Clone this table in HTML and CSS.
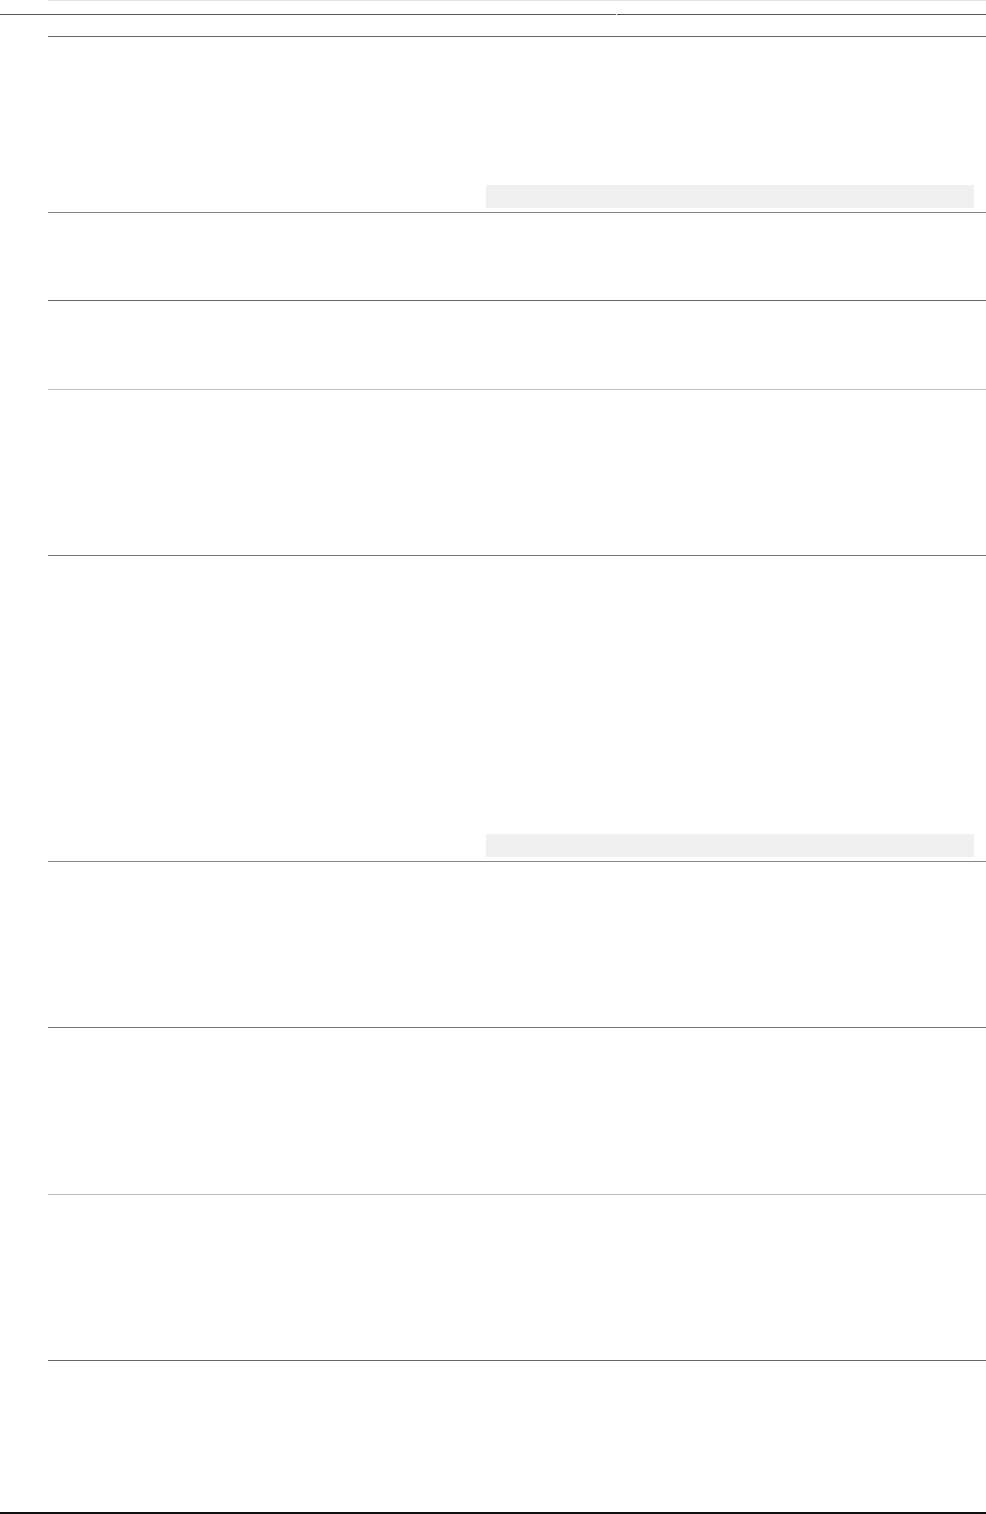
FILE: index.html
```html
<!DOCTYPE html>
<html>
<head>
<meta charset="utf-8">
<link rel="stylesheet" href="styles.css">
</head>
<body>
<div class="page">
  <div class="topline"></div>
  <div class="split">
    <div class="seg seg-left"></div>
    <div class="seg seg-right"></div>
  </div>
  <div class="list">
    <div class="row h176 c66"><div class="bar"></div></div>
    <div class="row h88 c88"></div>
    <div class="row h89 c66"></div>
    <div class="row h166 cc0"></div>
    <div class="row h306 c77"><div class="bar"></div></div>
    <div class="row h166 c88"></div>
    <div class="row h167 c77"></div>
    <div class="row h166 cbb"></div>
    <div class="row h152 c66"></div>
  </div>
  <div class="bottomline"></div>
</div>
</body>
</html>
```

FILE: styles.css
```css
html, body {
  margin: 0;
  padding: 0;
  background: #fff;
  font-family: "Liberation Sans", Arial, sans-serif;
}
.page {
  width: 986px;
  height: 1514px;
  display: flex;
  flex-direction: column;
  overflow: hidden;
}
.topline {
  margin-left: 48px;
  height: 14px;
  border-top: 1px solid #e2e2e2;
  box-sizing: border-box;
}
.split {
  display: flex;
  gap: 1px;
  height: 22px;
}
.seg {
  border-top: 1px solid #555;
}
.seg-left { width: 616px; }
.seg-right { flex: 1; }
.list {
  margin-left: 48px;
  display: flex;
  flex-direction: column;
}
.row {
  box-sizing: border-box;
  border-top: 1px solid #666;
  display: flex;
  flex-direction: column;
  justify-content: flex-end;
  padding-bottom: 4px;
}
.c66 { border-top-color: #666; }
.c77 { border-top-color: #777; }
.c88 { border-top-color: #888; }
.cbb { border-top-color: #bbb; }
.cc0 { border-top-color: #c4c4c4; }
.h176 { height: 176px; }
.h88 { height: 88px; }
.h89 { height: 89px; }
.h166 { height: 166px; }
.h167 { height: 167px; }
.h306 { height: 306px; }
.h152 { height: 152px; }
.bar {
  margin-left: 438px;
  width: 488px;
  height: 23px;
  background: #efefef;
}
.bottomline {
  height: 2px;
  background: #111;
}
```
